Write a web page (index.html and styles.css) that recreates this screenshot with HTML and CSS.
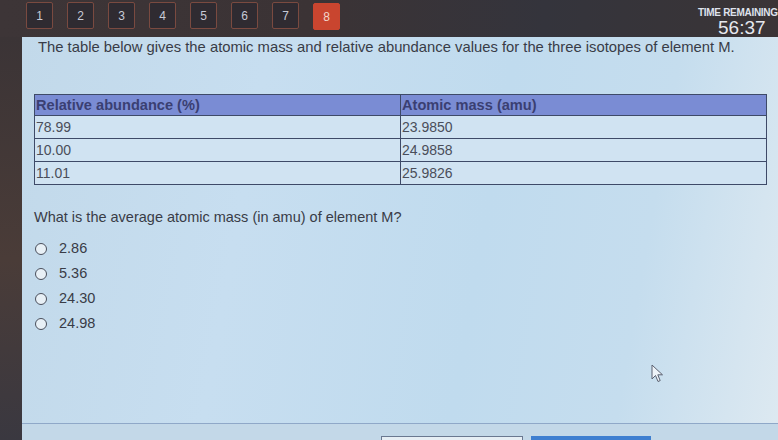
FILE: index.html
```html
<!DOCTYPE html>
<html>
<head>
<meta charset="utf-8">
<link rel="stylesheet" href="styles.css">
</head>
<body>
<div class="screen">
  <header class="topbar">
    <nav class="qnav">
      <span class="qbtn">1</span>
      <span class="qbtn">2</span>
      <span class="qbtn">3</span>
      <span class="qbtn">4</span>
      <span class="qbtn">5</span>
      <span class="qbtn">6</span>
      <span class="qbtn">7</span>
      <span class="qbtn current">8</span>
    </nav>
    <div class="timer">
      <div class="timer-label">TIME REMAINING</div>
      <div class="timer-value">56:37</div>
    </div>
  </header>
  <div class="main">
    <div class="leftstrip"></div>
    <section class="panel">
      <p class="intro">The table below gives the atomic mass and relative abundance values for the three isotopes of element M.</p>
      <table class="data">
        <thead>
          <tr><th>Relative abundance (%)</th><th>Atomic mass (amu)</th></tr>
        </thead>
        <tbody>
          <tr><td>78.99</td><td>23.9850</td></tr>
          <tr><td>10.00</td><td>24.9858</td></tr>
          <tr><td>11.01</td><td>25.9826</td></tr>
        </tbody>
      </table>
      <p class="question">What is the average atomic mass (in amu) of element M?</p>
      <ul class="options">
        <li><span class="radio"></span>2.86</li>
        <li><span class="radio"></span>5.36</li>
        <li><span class="radio"></span>24.30</li>
        <li><span class="radio"></span>24.98</li>
      </ul>
      <div class="spacer"></div>
      <footer class="footer">
        <span class="fbtn outline"></span>
        <span class="fbtn solid"></span>
      </footer>
      <svg class="cursor" width="14" height="20" viewBox="0 0 14 20">
        <path d="M1 1 L1 15 L4.5 11.5 L7 17.5 L9.2 16.6 L6.8 10.8 L11.5 10.8 Z" fill="#eef3f8" stroke="#5a6070" stroke-width="1"/>
      </svg>
    </section>
  </div>
</div>
</body>
</html>
```
FILE: styles.css
```css
html, body {
  margin: 0;
  padding: 0;
}
body {
  font-family: "Liberation Sans", Arial, sans-serif;
  background: #3a3335;
}
.screen {
  width: 778px;
  height: 440px;
  overflow: hidden;
  display: flex;
  flex-direction: column;
  background: linear-gradient(90deg, #3d3537 0%, #3b3335 40%, #34343c 70%, #3a3436 100%);
}
.topbar {
  height: 37px;
  flex: none;
  display: flex;
  justify-content: space-between;
  align-items: flex-start;
  padding-left: 26px;
}
.qnav {
  display: flex;
  gap: 14px;
  margin-top: 2px;
}
.qbtn {
  width: 25px;
  height: 25px;
  border: 1px solid #7a4a40;
  border-radius: 2px;
  background: #2f2b31;
  color: #c7cad6;
  font-size: 12px;
  display: flex;
  align-items: center;
  justify-content: center;
}
.qbtn.current {
  background: #c9452f;
  border-color: #c9452f;
  color: #f2d6cc;
  margin-top: 1px;
}
.timer {
  width: 80px;
  margin-top: 7px;
  display: flex;
  flex-direction: column;
  align-items: flex-start;
  white-space: nowrap;
}
.timer-label {
  font-size: 10px;
  line-height: 12px;
  font-weight: bold;
  color: #dfe2ec;
  letter-spacing: -0.3px;
}
.timer-value {
  font-size: 19px;
  color: #e6e8ee;
  margin-left: 20px;
  line-height: 18px;
}
.main {
  flex: 1;
  display: flex;
  min-height: 0;
}
.leftstrip {
  width: 22px;
  flex: none;
  background: linear-gradient(180deg, #3b3436 0%, #4a3c38 55%, #3a3840 100%);
}
.panel {
  flex: 1;
  position: relative;
  display: flex;
  flex-direction: column;
  padding: 0 11px 0 12px;
  background: linear-gradient(100deg, #c2d9ea 0%, #c7def0 30%, #c0dbee 60%, #c5ddee 80%, #dde9f1 100%);
  color: #393c47;
}
.intro {
  margin: 2px 0 0 4px;
  font-size: 14.8px;
  line-height: 17px;
  white-space: nowrap;
}
.data {
  margin-top: 38px;
  width: 733px;
  border-collapse: collapse;
  font-size: 14px;
  color: #4a4e5a;
}
.data th, .data td {
  border: 1px solid #3e4a68;
  text-align: left;
  padding: 0 1px;
  width: 50%;
}
.data th {
  height: 20px;
  background: #7a8cd4;
  color: #3a3f72;
  font-weight: bold;
  font-size: 14.6px;
}
.data td {
  height: 22px;
  background: #d0e3f2;
}
.question {
  margin: 24px 0 0 0;
  font-size: 14.5px;
  line-height: 17px;
}
.options {
  list-style: none;
  margin: 14px 0 0 0;
  padding: 0;
  display: flex;
  flex-direction: column;
  gap: 8px;
}
.options li {
  display: flex;
  align-items: center;
  font-size: 14.5px;
  line-height: 17px;
  color: #393c47;
}
.radio {
  width: 10px;
  height: 10px;
  border: 1.5px solid #4a4f5c;
  border-radius: 50%;
  background: #e8f0f6;
  margin: 0 12px 0 1px;
}
.spacer {
  flex: 1;
}
.footer {
  height: 16px;
  margin: 0 -11px 0 -12px;
  border-top: 1px solid #8fa8c8;
  display: flex;
  align-items: flex-end;
  padding-left: 359px;
  gap: 8px;
  background: #c3d8e8;
}
.fbtn {
  display: block;
  height: 3px;
  width: 140px;
}
.fbtn.outline {
  border: 1px solid #6a7890;
  border-bottom: none;
  background: #e6eef4;
}
.fbtn.solid {
  background: #3f7fd0;
  width: 120px;
  height: 4px;
}
.cursor {
  position: absolute;
  left: 629px;
  top: 327px;
}
```
